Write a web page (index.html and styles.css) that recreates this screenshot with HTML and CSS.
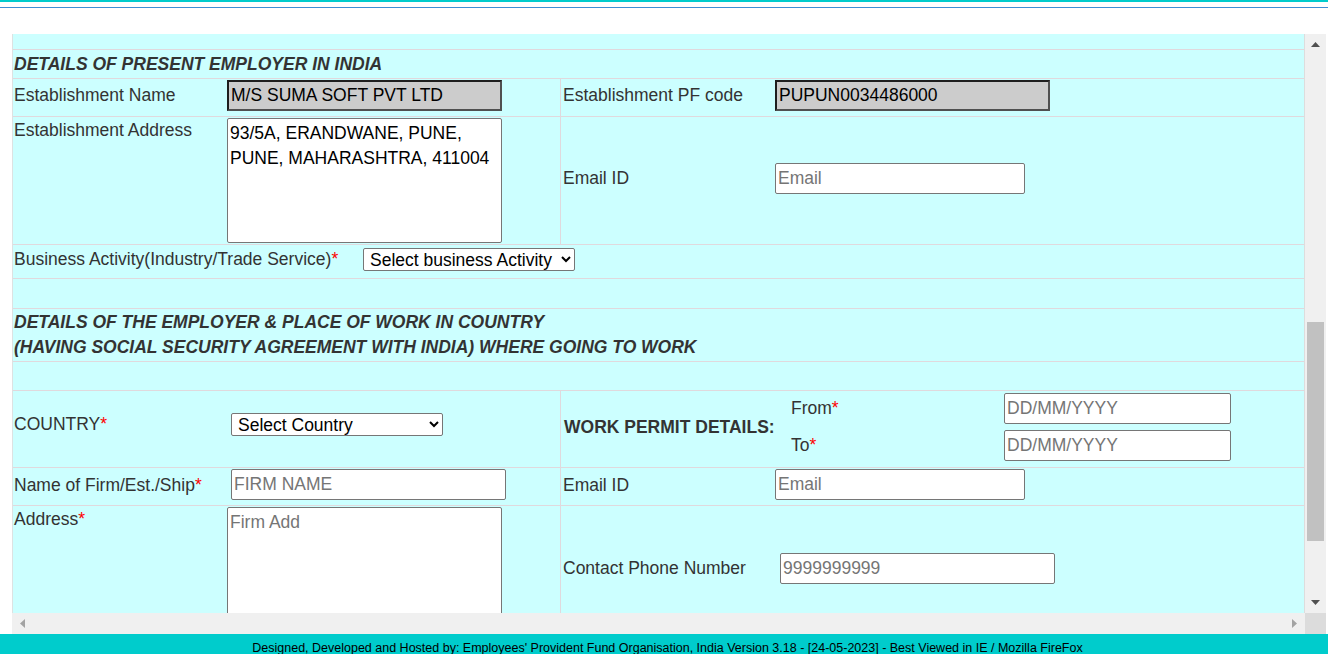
FILE: index.html
```html
<!DOCTYPE html>
<html lang="en">
<head>
<meta charset="utf-8">
<title>Details of Employer</title>
<link rel="stylesheet" href="styles.css">
</head>
<body>
<div class="topbar"><div class="topbar-rule"></div></div>
<div class="frame">
  <div class="viewport">
    <div class="form">
      <div class="row r-cut"></div>
      <div class="row r-head1"><div class="sec">DETAILS OF PRESENT EMPLOYER IN INDIA</div></div>
      <div class="row split r-std">
        <div class="half">
          <span class="lbl">Establishment Name</span>
          <input class="ro" type="text" value="M/S SUMA SOFT PVT LTD" readonly>
        </div>
        <div class="half right">
          <span class="lbl">Establishment PF code</span>
          <input class="ro" type="text" value="PUPUN0034486000" readonly>
        </div>
      </div>
      <div class="row split r-addr">
        <div class="half top">
          <span class="lbl">Establishment Address</span>
          <textarea class="ta" readonly>93/5A, ERANDWANE, PUNE, PUNE, MAHARASHTRA, 411004</textarea>
        </div>
        <div class="half right mid">
          <span class="lbl">Email ID</span>
          <input class="inp w250" type="text" placeholder="Email">
        </div>
      </div>
      <div class="row r-biz">
        <span class="lbl">Business Activity(Industry/Trade Service)<span class="req">*</span></span>
        <select class="sel"><option>Select business Activity</option></select>
      </div>
      <div class="row r-empty1"></div>
      <div class="row r-head2"><div class="sec">DETAILS OF THE EMPLOYER &amp; PLACE OF WORK IN COUNTRY<br>(HAVING SOCIAL SECURITY AGREEMENT WITH INDIA) WHERE GOING TO WORK</div></div>
      <div class="row r-empty2"></div>
      <div class="row split r-country">
        <div class="half country-left">
          <span class="lbl">COUNTRY<span class="req">*</span></span>
          <select class="sel shift4"><option>Select Country</option></select>
        </div>
        <div class="half right permit">
          <span class="lbl bold permit-title">WORK PERMIT DETAILS:</span>
          <span class="lbl">From<span class="req">*</span></span>
          <input class="inp w227" type="text" placeholder="DD/MM/YYYY">
          <span class="lbl">To<span class="req">*</span></span>
          <input class="inp w227" type="text" placeholder="DD/MM/YYYY">
        </div>
      </div>
      <div class="row split r-std r-firm">
        <div class="half">
          <span class="lbl">Name of Firm/Est./Ship<span class="req">*</span></span>
          <input class="inp w275 shift4" type="text" placeholder="FIRM NAME">
        </div>
        <div class="half right">
          <span class="lbl">Email ID</span>
          <input class="inp w250" type="text" placeholder="Email">
        </div>
      </div>
      <div class="row split r-addr2">
        <div class="half top">
          <span class="lbl">Address<span class="req">*</span></span>
          <textarea class="ta ta-empty" placeholder="Firm Add"></textarea>
        </div>
        <div class="half right mid">
          <span class="lbl">Contact Phone Number</span>
          <input class="inp w275 shift5" type="text" placeholder="9999999999">
        </div>
      </div>
    </div>
  </div>
  <div class="vbar">
    <div class="sb-btn"><svg width="9" height="5" viewBox="0 0 9 5"><polygon points="0,5 4.5,0 9,5" fill="#505050"/></svg></div>
    <div class="vtrack"><div class="vthumb"></div></div>
    <div class="sb-btn"><svg width="9" height="5" viewBox="0 0 9 5"><polygon points="0,0 9,0 4.5,5" fill="#505050"/></svg></div>
  </div>
  <div class="hbar">
    <div class="sb-btn"><svg width="5" height="9" viewBox="0 0 5 9"><polygon points="5,0 5,9 0,4.5" fill="#a3a3a3"/></svg></div>
    <div class="sb-btn"><svg width="5" height="9" viewBox="0 0 5 9"><polygon points="0,0 5,4.5 0,9" fill="#a3a3a3"/></svg></div>
  </div>
  <div class="corner"></div>
</div>
<div class="footer">Designed, Developed and Hosted by: Employees' Provident Fund Organisation, India Version 3.18 - [24-05-2023] - Best Viewed in IE / Mozilla FireFox</div>
</body>
</html>
```

FILE: styles.css
```css
* { box-sizing: border-box; }
html, body { margin: 0; height: 100%; overflow: hidden; }
body { font-family: "Liberation Sans", Arial, sans-serif; background: #fff; color: #333; }

.topbar { height: 34px; border-top: 2px solid #00cccc; padding-top: 5px; }
.topbar-rule { border-top: 1px solid #3d8fd6; }

.frame {
  display: grid;
  grid-template-columns: 1fr 21px;
  grid-template-rows: 579px 21px;
  margin: 0 2px 0 12px;
  height: 600px;
}
.viewport { overflow: hidden; }
.form {
  background: #ccffff;
  border-left: 1px solid #dde2e2;
  border-right: 1px solid #dddddd;
  font-size: 17.5px;
  line-height: 25px;
  min-height: 100%;
}
.row { border-bottom: 1px solid #e0d9dd; }
.r-cut { height: 16px; }
.r-head1 { height: 29px; padding: 2px 1px 0; }
.r-head2 { height: 53px; padding: 1px 1px 0; }
.r-empty1 { height: 30px; }
.r-empty2 { height: 29px; }
.sec { font-weight: bold; font-style: italic; color: #333; }

.split { display: grid; grid-template-columns: 547px 1fr; }
.half { display: grid; grid-template-columns: 214px 1fr; align-items: center; justify-items: start; }
.half.right { border-left: 1px solid #e0d9dd; }
.lbl { padding-left: 1px; color: #333; white-space: nowrap; }
.half.right .lbl { padding-left: 2px; }
.bold { font-weight: bold; }
.req { color: #ff0000; }

.r-std { height: 38px; }
.r-std .half { padding-bottom: 4px; }
.r-firm .lbl { padding-top: 2px; }
.r-addr { height: 128px; }
.r-addr2 { height: 128px; }
.half.top { align-items: start; padding-top: 1px; }
.half.mid { padding-bottom: 5px; }
.r-addr2 .half.mid { padding-bottom: 3px; }

.r-biz { height: 34px; display: grid; grid-template-columns: 350px auto; align-items: center; justify-items: start; padding-bottom: 4px; }

.r-country { height: 77px; }
.country-left { padding-bottom: 10px; }
.permit {
  grid-template-columns: 228px 215px 1fr;
  grid-template-rows: 31px 31px;
  row-gap: 6px;
  align-content: start;
  padding-top: 2px;
}
.permit-title { grid-row: 1 / span 2; align-self: center; }
.half.right .permit-title { padding-left: 3px; }

input, textarea, select { font-family: "Liberation Sans", Arial, sans-serif; font-size: 17.5px; color: #000; margin: 0; }
.ro {
  width: 275px; height: 31px;
  background: #cccccc;
  border: 2px solid;
  border-color: #1e1e1e #505050 #505050 #1e1e1e;
  padding: 0 2px;
  outline: none;
}
.inp {
  height: 31px;
  background: #fff;
  border: 1px solid #767676;
  border-radius: 2px;
  padding: 1px 2px;
}
.inp::placeholder, .ta::placeholder { color: #757575; opacity: 1; }
.w250 { width: 250px; }
.w275 { width: 275px; }
.w227 { width: 227px; }
.shift4 { margin-left: 4px; }
.shift5 { margin-left: 5px; }
.ta {
  width: 275px; height: 125px;
  background: #fff;
  border: 1px solid #767676;
  border-radius: 2px;
  padding: 2px 2px;
  line-height: 25px;
  resize: none;
  overflow: hidden;
}
.sel {
  width: 212px; height: 23px;
  background: #fff;
  border: 1px solid #767676;
  border-radius: 2px;
  padding: 0 0 0 2px;
  line-height: 21px;
}

.vbar { background: #f0f0f0; display: flex; flex-direction: column; }
.sb-btn { width: 21px; height: 21px; display: flex; align-items: center; justify-content: center; flex: none; }
.vtrack { flex: 1; padding: 0 2px; }
.vthumb { margin-top: 267px; height: 219px; background: #c1c1c1; }
.hbar { background: #f0f0f0; display: flex; justify-content: space-between; }
.corner { background: #dcdcdc; }

.footer {
  background: #00cccc;
  height: 40px;
  padding-top: 7px;
  padding-left: 7px;
  text-align: center;
  font-size: 12.5px;
  line-height: 15px;
  color: #000;
}
```
